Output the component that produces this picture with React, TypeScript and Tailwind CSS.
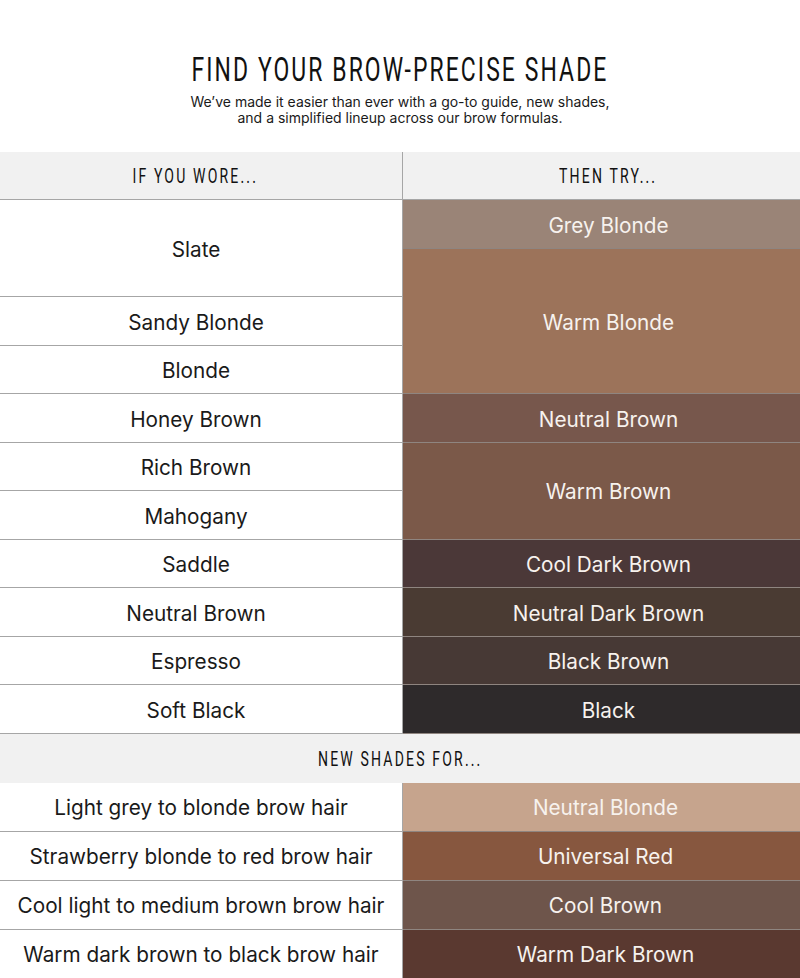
import React from "react";

type Cell = { label: string; span?: number };

const wore: Cell[] = [
  { label: "Slate", span: 2 },
  { label: "Sandy Blonde" },
  { label: "Blonde" },
  { label: "Honey Brown" },
  { label: "Rich Brown" },
  { label: "Mahogany" },
  { label: "Saddle" },
  { label: "Neutral Brown" },
  { label: "Espresso" },
  { label: "Soft Black" },
];

const tryShades = [
  { label: "Grey Blonde", span: 1, bg: "bg-[#9a8477]" },
  { label: "Warm Blonde", span: 3, bg: "bg-[#9c735a]" },
  { label: "Neutral Brown", span: 1, bg: "bg-[#77574c]" },
  { label: "Warm Brown", span: 2, bg: "bg-[#7b5949]" },
  { label: "Cool Dark Brown", span: 1, bg: "bg-[#4b3838]" },
  { label: "Neutral Dark Brown", span: 1, bg: "bg-[#4a3b33]" },
  { label: "Black Brown", span: 1, bg: "bg-[#473935]" },
  { label: "Black", span: 1, bg: "bg-[#2e2a2b]" },
];

const newShades = [
  { hair: "Light grey to blonde brow hair", shade: "Neutral Blonde", bg: "bg-[#c6a48d]" },
  { hair: "Strawberry blonde to red brow hair", shade: "Universal Red", bg: "bg-[#87573f]" },
  { hair: "Cool light to medium brown brow hair", shade: "Cool Brown", bg: "bg-[#6e554b]" },
  { hair: "Warm dark brown to black brow hair", shade: "Warm Dark Brown", bg: "bg-[#5a3930]" },
];

const spanRows: Record<number, string> = {
  1: "row-span-1",
  2: "row-span-2",
  3: "row-span-3",
};

function Condensed({ children, size }: { children: React.ReactNode; size: "lg" | "sm" }) {
  return (
    <span
      className={
        size === "lg"
          ? "inline-block scale-x-[0.695] text-[33px] leading-none tracking-[3px] text-[#111] whitespace-nowrap"
          : "inline-block scale-x-[0.72] text-[19.5px] leading-none tracking-[3px] text-[#111] whitespace-nowrap"
      }
      style={{ fontFamily: "Roboto, 'Liberation Sans', sans-serif" }}
    >
      {children}
    </span>
  );
}

export default function App() {
  return (
    <div className="w-[800px] h-[978px] bg-white overflow-hidden font-['Inter','Noto_Sans',sans-serif] text-[#1a1a1a]">
      {/* Heading */}
      <div className="h-[152px] flex flex-col items-center pt-[53px]">
        <Condensed size="lg">FIND YOUR BROW-PRECISE SHADE</Condensed>
        <p className="mt-[8px] text-[14px] leading-[16px] text-center text-[#1a1a1a]">
          We’ve made it easier than ever with a go-to guide, new shades,
          <br />
          and a simplified lineup across our brow formulas.
        </p>
      </div>

      {/* Column headers */}
      <div className="grid grid-cols-[403px_1fr] h-[48px] bg-[#f1f1f1] border-b border-[#a6a6a6]">
        <div className="flex items-center justify-center border-r border-[#a6a6a6] pt-[2px]">
          <span className="-ml-[11px]">
            <Condensed size="sm">IF YOU WORE...</Condensed>
          </span>
        </div>
        <div className="flex items-center justify-center pl-[14px] pt-[2px]">
          <Condensed size="sm">THEN TRY...</Condensed>
        </div>
      </div>

      {/* Main table */}
      <div className="grid grid-cols-[403px_1fr] grid-rows-[repeat(11,48.5px)] grid-flow-col text-[20.75px]">
        {wore.map((c) => (
          <div
            key={c.label}
            className={`col-start-1 ${spanRows[c.span ?? 1]} flex items-center justify-center border-b border-r border-[#a6a6a6] pt-[3px]`}
          >
            <span className="-ml-[10px]">{c.label}</span>
          </div>
        ))}
        {tryShades.map((s) => (
          <div
            key={s.label}
            className={`col-start-2 ${spanRows[s.span]} ${s.bg} flex items-center justify-center border-b border-[#8f8580] text-[#f7f2ee] pl-[14px] pt-[3px]`}
          >
            {s.label}
          </div>
        ))}
      </div>

      {/* New shades */}
      <div className="h-[49px] bg-[#f1f1f1] flex items-center justify-center pt-[3px]">
        <Condensed size="sm">NEW SHADES FOR...</Condensed>
      </div>
      <div className="grid grid-cols-[403px_1fr] grid-rows-[repeat(4,49px)] text-[20.75px]">
        {newShades.map((r, i) => (
          <React.Fragment key={r.hair}>
            <div
              className={`flex items-center justify-center border-r border-[#a6a6a6] pt-[2px] ${
                i < newShades.length - 1 ? "border-b" : ""
              } border-b-[#a6a6a6] whitespace-nowrap`}
            >
              {r.hair}
            </div>
            <div
              className={`${r.bg} flex items-center justify-center text-[#f7f2ee] pl-[8px] pt-[2px] ${
                i < newShades.length - 1 ? "border-b border-[#8f8580]" : ""
              }`}
            >
              {r.shade}
            </div>
          </React.Fragment>
        ))}
      </div>
    </div>
  );
}
